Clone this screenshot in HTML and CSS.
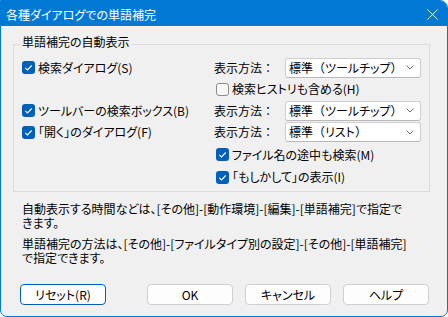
FILE: index.html
```html
<!DOCTYPE html>
<html lang="ja">
<head>
<meta charset="utf-8">
<link rel="stylesheet" href="styles.css">
</head>
<body>
<div class="window">
  <div class="titlebar">
    <span class="title">各種ダイアログでの単語補完</span>
    <svg class="close" width="11" height="11" viewBox="0 0 11 11"><path d="M0.5 0.5 L10.5 10.5 M10.5 0.5 L0.5 10.5" stroke="#fff" stroke-width="1" fill="none"/></svg>
  </div>
  <div class="content">
    <div class="group">
      <span class="group-label">単語補完の自動表示</span>
      <div class="row ra">
        <div class="left"><span class="cb checked"></span>検索ダイアログ(S)</div>
        <div class="right"><span class="lbl">表示方法<span class="fw">：</span></span><div class="combo"><span>標準<span class="fw">（</span>ツールチップ<span class="fw">）</span></span><span class="chev"></span></div></div>
      </div>
      <div class="row rb">
        <div class="left"></div>
        <div class="right sub"><span class="cb"></span>検索ヒストリも含める(H)</div>
      </div>
      <div class="row rc">
        <div class="left"><span class="cb checked"></span>ツールバーの検索ボックス(B)</div>
        <div class="right"><span class="lbl">表示方法<span class="fw">：</span></span><div class="combo"><span>標準<span class="fw">（</span>ツールチップ<span class="fw">）</span></span><span class="chev"></span></div></div>
      </div>
      <div class="row rd">
        <div class="left"><span class="cb checked"></span>「開く」のダイアログ(F)</div>
        <div class="right"><span class="lbl">表示方法<span class="fw">：</span></span><div class="combo"><span>標準<span class="fw">（</span>リスト<span class="fw">）</span></span><span class="chev"></span></div></div>
      </div>
      <div class="row re">
        <div class="left"></div>
        <div class="right sub"><span class="cb checked"></span>ファイル名の途中も検索(M)</div>
      </div>
      <div class="row rf">
        <div class="left"></div>
        <div class="right sub"><span class="cb checked"></span>「もしかして」の表示(I)</div>
      </div>
    </div>
    <p class="note n1">自動表示する時間などは、[その他]-[動作環境]-[編集]-[単語補完]で指定で<br>きます。</p>
    <p class="note n2">単語補完の方法は、[その他]-[ファイルタイプ別の設定]-[その他]-[単語補完]<br>で指定できます。</p>
    <div class="buttons">
      <button class="btn reset">リセット(R)</button>
      <button class="btn">OK</button>
      <button class="btn">キャンセル</button>
      <button class="btn">ヘルプ</button>
    </div>
  </div>
</div>
</body>
</html>
```
FILE: styles.css
```css
html, body {
  margin: 0;
  padding: 0;
  background: #ffffff;
}
body {
  font-family: "Noto Sans CJK JP", "Noto Sans", sans-serif;
  font-size: 12px;
  color: #000;
  font-feature-settings: "palt";
}
.fw {
  font-feature-settings: normal;
}
.window {
  width: 448px;
  height: 317px;
  box-sizing: border-box;
  border: 1px solid #0078d4;
  border-radius: 0 8px 7px 7px;
  background: #f0f0f0;
  overflow: hidden;
}
.titlebar {
  height: 25px;
  background: #0078d4;
  display: flex;
  align-items: center;
  justify-content: space-between;
}
.title {
  color: #fff;
  font-size: 12px;
  line-height: 14px;
  padding-left: 5px;
  padding-top: 3px;
}
.close {
  margin-right: 9px;
  margin-top: 2px;
}
.group {
  position: relative;
  margin: 18px 17px 0 12px;
  border: 1px solid #dcdcdc;
  padding: 12px 0 3px 8px;
}
.group-label {
  position: absolute;
  left: 6px;
  top: -10px;
  padding: 0 2px;
  background: #f0f0f0;
  line-height: 14px;
}
.row {
  display: flex;
  align-items: center;
}
.ra { height: 21px; }
.rb { height: 22px; }
.rc { height: 21px; }
.rd { height: 22px; }
.re { height: 23px; }
.rf { height: 22px; }
.left {
  width: 192px;
  display: flex;
  align-items: center;
  gap: 3px;
  line-height: 14px;
  white-space: nowrap;
}
.right {
  display: flex;
  align-items: center;
  line-height: 14px;
  white-space: nowrap;
}
.right.sub {
  padding-left: 2px;
  gap: 3px;
}
.lbl {
  width: 71px;
}
.cb {
  width: 13px;
  height: 13px;
  box-sizing: border-box;
  border-radius: 3px;
  border: 1px solid #8a8a8a;
  background: #f7f7f7;
  flex: none;
}
.cb.checked {
  border: none;
  background: #005fb8 url("data:image/svg+xml;utf8,<svg xmlns='http://www.w3.org/2000/svg' width='13' height='13' viewBox='0 0 13 13'><path d='M3.3 6.9 L5.5 9 L9.7 4.5' stroke='white' stroke-width='1.1' fill='none'/></svg>") no-repeat center;
}
.combo {
  width: 136px;
  height: 20px;
  box-sizing: border-box;
  border: 1px solid #cfcfcf;
  border-bottom-color: #b8b8b8;
  border-radius: 3px;
  background: #fff;
  display: flex;
  align-items: center;
  justify-content: space-between;
  padding: 0 6px 0 3px;
}
.chev {
  width: 8px;
  height: 5px;
  background: url("data:image/svg+xml;utf8,<svg xmlns='http://www.w3.org/2000/svg' width='8' height='5' viewBox='0 0 8 5'><path d='M0.5 0.5 L4 4 L7.5 0.5' stroke='%23707070' stroke-width='1' fill='none'/></svg>") no-repeat center;
}
.note {
  margin: 0 0 0 21px;
  line-height: 14px;
  white-space: nowrap;
}
.n1 { margin-top: 10px; }
.n2 { margin-top: 7px; }
.buttons {
  display: flex;
  gap: 12px;
  margin-top: 19px;
  padding: 0 18px 0 19px;
}
.btn {
  width: 86px;
  height: 21px;
  box-sizing: border-box;
  border: 1px solid #d0d0d0;
  border-radius: 4px;
  background: #fdfdfd;
  font-family: "Noto Sans CJK JP", "Noto Sans", sans-serif;
  font-size: 12px;
  font-feature-settings: "palt";
  color: #000;
  padding: 0;
  line-height: 14px;
}
.btn.reset {
  border-color: #005fb8;
  margin-right: auto;
}
```
